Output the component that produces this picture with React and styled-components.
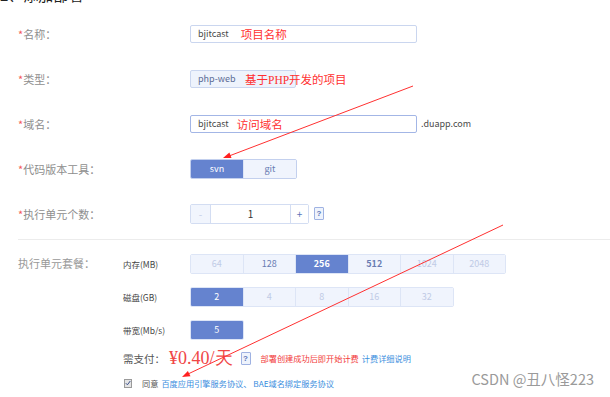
import React from 'react';
import styled, { createGlobalStyle } from 'styled-components';

const GlobalStyle = createGlobalStyle`
  html, body {
    margin: 0;
    padding: 0;
    background: #fff;
    overflow: hidden;
  }
  body {
    width: 610px;
    height: 397px;
    font-family: "Noto Sans CJK SC", "Noto Sans", sans-serif;
  }
`;

const Page = styled.div`
  position: relative;
  width: 610px;
  height: 397px;
  overflow: hidden;
`;

const Heading = styled.div`
  margin-top: -13px;
  height: 24px;
  font-size: 15px;
  line-height: 16px;
  color: #222;
  white-space: nowrap;
`;

const Form = styled.div`
  padding-left: 18px;
`;

const Row = styled.div`
  display: flex;
  align-items: center;
  height: 45px;
`;

const Label = styled.div`
  width: 172px;
  flex-shrink: 0;
  font-size: 11px;
  color: #8e8e8e;
  white-space: nowrap;

  .star {
    color: #f45a5a;
  }
`;

const TextBox = styled.div`
  display: flex;
  align-items: center;
  box-sizing: border-box;
  width: ${p => p.$width}px;
  height: 18px;
  padding-left: 7px;
  border: 1px solid ${p => (p.$focus ? '#a3b6e6' : '#cad6ef')};
  border-radius: 2px;
  background: ${p => (p.$filled ? '#eef3fc' : '#fff')};
  font-size: 9px;
  color: ${p => (p.$filled ? '#5a6a94' : '#4a4a4a')};
  white-space: nowrap;
  overflow: visible;
`;

const Note = styled.span`
  margin-left: ${p => p.$offset}px;
  font-size: 11.5px;
  color: #ff3030;
  white-space: nowrap;

  .latin {
    font-family: "Liberation Serif", serif;
  }
`;

const Suffix = styled.span`
  margin-left: 4px;
  font-size: 9px;
  color: #4a4a4a;
`;

const Group = styled.div`
  display: inline-flex;
  border: 1px solid ${p => (p.$strong ? '#c3d0ee' : '#dde5f6')};
  border-radius: 2px;
  overflow: hidden;
`;

const Cell = styled.div`
  width: ${p => p.$width || 51.5}px;
  height: 18px;
  display: flex;
  align-items: center;
  justify-content: center;
  font-size: 9px;
  background: ${p => (p.$active ? '#6583cf' : '#f0f4fd')};
  color: ${p => (p.$active ? '#fff' : p.$muted ? '#c0cbe6' : '#6a7db3')};
  font-weight: ${p => (p.$bold ? 600 : 400)};
  & + & {
    border-left: 1px solid #dde5f6;
  }
`;

const Stepper = styled.div`
  display: inline-flex;
  border: 1px solid #d3ddf2;
  border-radius: 2px;
  height: 18px;
`;

const StepBtn = styled.div`
  width: ${p => p.$width}px;
  display: flex;
  align-items: center;
  justify-content: center;
  font-size: 10px;
  background: ${p => (p.$muted ? '#f1f5fd' : '#fff')};
  color: ${p => (p.$muted ? '#c3cde6' : p.$dark ? '#333' : '#5a74b8')};
  & + & {
    border-left: 1px solid #d3ddf2;
  }
`;

const Help = styled.span`
  display: inline-flex;
  align-items: center;
  justify-content: center;
  box-sizing: border-box;
  width: 10px;
  height: 13px;
  margin-left: ${p => p.$gap}px;
  border: 1px solid #9fb2e2;
  border-radius: 1px;
  background: #eef3fc;
  color: #5a74b8;
  font-size: 8px;
  font-weight: 700;
  font-family: "Liberation Sans", sans-serif;
`;

const Divider = styled.div`
  margin-top: 3px;
  height: 1px;
  background: #ececec;
`;

const Package = styled.div`
  display: grid;
  grid-template-columns: 105px 1fr;
  padding-top: 7px;
`;

const PackageLabel = styled.div`
  font-size: 11px;
  color: #999;
  line-height: 33px;
  white-space: nowrap;
`;

const SubRow = styled.div`
  display: grid;
  grid-template-columns: 67px auto;
  align-items: center;
  height: 33px;
  justify-content: start;
`;

const SubLabel = styled.div`
  font-size: 8.5px;
  color: #444;
  white-space: nowrap;
`;

const PayRow = styled.div`
  display: flex;
  align-items: center;
  height: 24px;
  padding-left: 105px;
  white-space: nowrap;
`;

const PayLabel = styled.span`
  font-size: 10.5px;
  color: #555;
  margin-right: 4px;
`;

const Price = styled.span`
  font-family: "Liberation Serif", serif;
  font-size: 18px;
  color: #f04646;
`;

const Small = styled.span`
  font-size: 8.2px;
  color: ${p => p.$color};
  margin-left: ${p => p.$gap || 0}px;
`;

const AgreeRow = styled.div`
  display: flex;
  align-items: center;
  height: 26px;
  padding-left: 106px;
  white-space: nowrap;
`;

const Check = styled.span`
  box-sizing: border-box;
  width: 8px;
  height: 9px;
  border: 1px solid #9a9a9a;
  background: #e4e4e4;
  display: inline-flex;
  align-items: center;
  justify-content: center;
  margin-right: 10px;
`;

const Overlay = styled.svg`
  position: absolute;
  left: 0;
  top: 0;
  pointer-events: none;
`;

const Watermark = styled.div`
  position: absolute;
  right: 16px;
  bottom: 9px;
  font-family: "Noto Sans CJK SC", "Noto Sans", sans-serif;
  font-size: 14.5px;
  line-height: 18px;
  color: #9a9a9a;
`;

const memory = [
  { v: '64', muted: true },
  { v: '128' },
  { v: '256', active: true, bold: true },
  { v: '512', bold: true },
  { v: '1024', muted: true },
  { v: '2048', muted: true },
];
const disk = [
  { v: '2', active: true },
  { v: '4', muted: true },
  { v: '8', muted: true },
  { v: '16', muted: true },
  { v: '32', muted: true },
];

const Req = ({ children }) => (
  <Label>
    <span className="star">*</span>
    {children}
  </Label>
);

export default function App() {
  return (
    <Page>
      <GlobalStyle />
      <Heading>2、添加部署</Heading>
      <Form>
        <Row>
          <Req>名称：</Req>
          <TextBox $width={227}>
            bjitcast<Note $offset={12}>项目名称</Note>
          </TextBox>
        </Row>
        <Row>
          <Req>类型：</Req>
          <TextBox $width={106} $filled>
            php-web
          </TextBox>
          <Note $offset={-51}>
            基于<span className="latin">PHP</span>开发的项目
          </Note>
        </Row>
        <Row>
          <Req>域名：</Req>
          <TextBox $width={227} $focus>
            bjitcast<Note $offset={8}>访问域名</Note>
          </TextBox>
          <Suffix>.duapp.com</Suffix>
        </Row>
        <Row>
          <Req>代码版本工具：</Req>
          <Group $strong>
            <Cell $active $width={52}>svn</Cell>
            <Cell $width={52}>git</Cell>
          </Group>
        </Row>
        <Row>
          <Req>执行单元个数：</Req>
          <Stepper>
            <StepBtn $width={19} $muted>-</StepBtn>
            <StepBtn $width={79} $dark>1</StepBtn>
            <StepBtn $width={17}>+</StepBtn>
          </Stepper>
          <Help $gap={5}>?</Help>
        </Row>
        <Divider />
        <Package>
          <PackageLabel>执行单元套餐：</PackageLabel>
          <div>
            <SubRow>
              <SubLabel>内存(MB)</SubLabel>
              <Group>
                {memory.map(m => (
                  <Cell key={m.v} $active={m.active} $muted={m.muted} $bold={m.bold}>
                    {m.v}
                  </Cell>
                ))}
              </Group>
            </SubRow>
            <SubRow>
              <SubLabel>磁盘(GB)</SubLabel>
              <Group>
                {disk.map(d => (
                  <Cell key={d.v} $active={d.active} $muted={d.muted}>
                    {d.v}
                  </Cell>
                ))}
              </Group>
            </SubRow>
            <SubRow>
              <SubLabel>带宽(Mb/s)</SubLabel>
              <Group>
                <Cell $active>5</Cell>
              </Group>
            </SubRow>
          </div>
        </Package>
        <PayRow>
          <PayLabel>需支付：</PayLabel>
          <Price>¥0.40/天</Price>
          <Help $gap={8}>?</Help>
          <Small $color="#f23a3a" $gap={10}>部署创建成功后即开始计费</Small>
          <Small $color="#3b8ede" $gap={3}>计费详细说明</Small>
        </PayRow>
        <AgreeRow>
          <Check>
            <svg width="6" height="6" viewBox="0 0 6 6">
              <path d="M0.8 3.2 L2.4 4.8 L5.3 1" fill="none" stroke="#3a4f8a" strokeWidth="1" />
            </svg>
          </Check>
          <Small $color="#555">同意</Small>
          <Small $color="#3b8ede" $gap={3}>百度应用引擎服务协议、 BAE域名绑定服务协议</Small>
        </AgreeRow>
      </Form>
      <Overlay width="610" height="397" viewBox="0 0 610 397">
        <line x1="413" y1="86" x2="229" y2="156" stroke="#ff3030" strokeWidth="1" />
        <polygon points="223,158 231.5,158 229.4,152.4" fill="#ff2020" />
        <line x1="503" y1="225" x2="188" y2="374" stroke="#ff3030" strokeWidth="1" />
        <polygon points="182,377 190.5,376.3 187.9,370.9" fill="#ff2020" />
      </Overlay>
      <Watermark>CSDN @丑八怪223</Watermark>
    </Page>
  );
}
